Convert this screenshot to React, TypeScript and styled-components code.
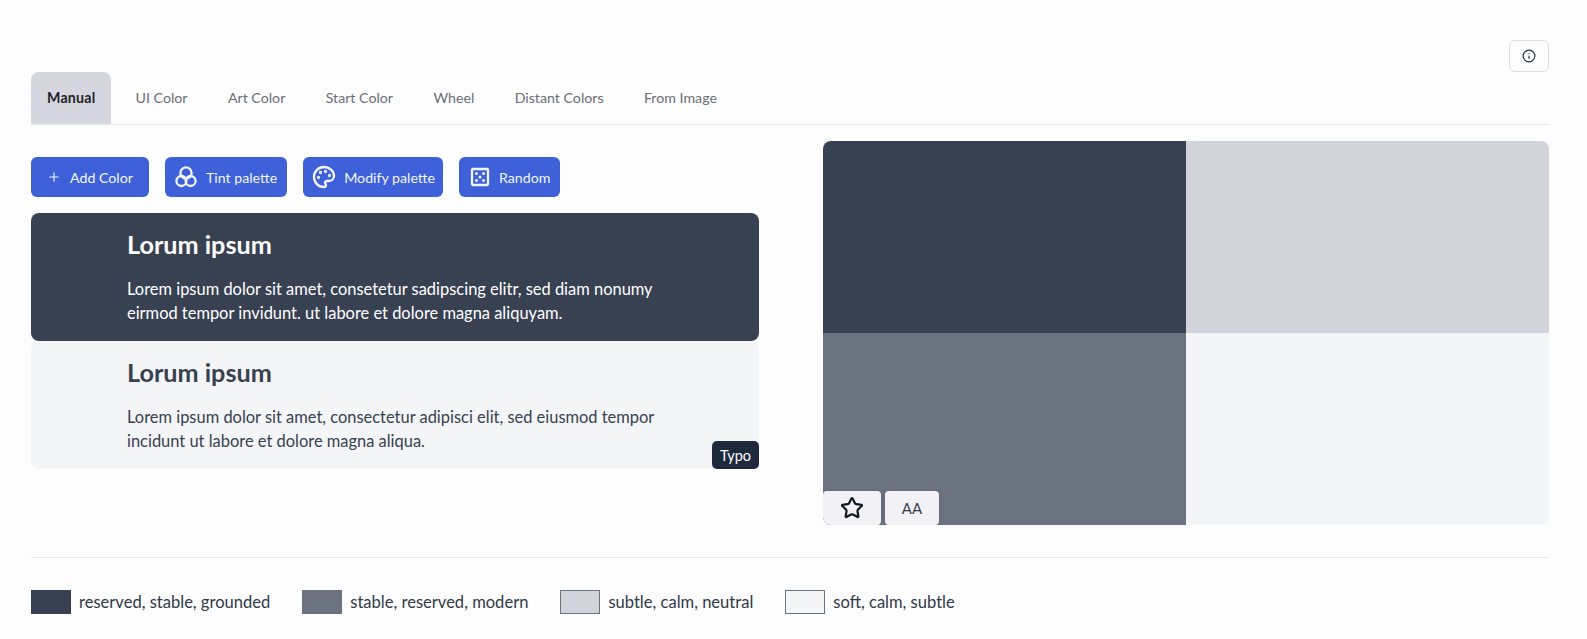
import React, { FC, ReactNode } from "react";
import styled, { createGlobalStyle } from "styled-components";
import { Info, Palette, Plus, Star } from "lucide-react";

const GlobalStyle = createGlobalStyle`
  html, body {
    margin: 0;
    padding: 0;
    background: #fdfdfe;
    font-family: "Lato", "Noto Sans", sans-serif;
    color: #1f2937;
  }
`;

const Page = styled.div`
  width: 1587px;
  height: 639px;
  box-sizing: border-box;
  padding: 40px 38px 0 31px;
  overflow: hidden;
`;

const TopBar = styled.div`
  display: flex;
  justify-content: flex-end;
`;

const InfoButton = styled.button`
  display: flex;
  align-items: center;
  justify-content: center;
  width: 40px;
  height: 32px;
  padding: 0;
  background: #fdfdfe;
  border: 1px solid #d9dce1;
  border-radius: 6px;
  color: #1f2937;
`;

const Tabs = styled.div`
  display: flex;
  gap: 8px;
  height: 52px;
  border-bottom: 1px solid #e5e7eb;
`;

const Tab = styled.div<{ $active?: boolean }>`
  display: flex;
  align-items: center;
  box-sizing: border-box;
  padding: 0 ${(p) => (p.$active ? "16px" : "16.2px")} 2px;
  height: 52px;
  font-size: 14.2px;
  font-weight: ${(p) => (p.$active ? 700 : 400)};
  letter-spacing: ${(p) => (p.$active ? "0.2px" : "0")};
  color: ${(p) => (p.$active ? "#1f2328" : "#6a6e75")};
  background: ${(p) => (p.$active ? "#d5d6df" : "transparent")};
  border-radius: 8px 8px 0 0;
`;

const Main = styled.div`
  display: grid;
  grid-template-columns: 728px 726px;
  column-gap: 64px;
  align-items: start;
`;

const LeftColumn = styled.div`
  padding-top: 32px;
`;

const Toolbar = styled.div`
  display: flex;
  gap: 16px;
  margin-bottom: 16px;
`;

const ActionButton = styled.button<{ $left: number; $right: number; $gap: number }>`
  display: flex;
  align-items: center;
  height: 40px;
  gap: ${(p) => p.$gap}px;
  padding: 0 ${(p) => p.$right}px 0 ${(p) => p.$left}px;
  border: none;
  border-radius: 6px;
  background: #3e60d8;
  color: #f4f6fe;
  font-family: inherit;
  font-size: 14.2px;
  white-space: nowrap;
`;

const CardStack = styled.div`
  position: relative;
`;

const Card = styled.div<{ $dark?: boolean }>`
  box-sizing: border-box;
  height: 128px;
  padding: 12.5px 90px 0 96px;
  border-radius: 8px;
  background: ${(p) => (p.$dark ? "#374151" : "#f3f5f6")};
  color: ${(p) => (p.$dark ? "#ffffff" : "#374151")};
`;

const CardTitle = styled.h2`
  margin: 0 0 15.5px;
  font-size: 25.2px;
  line-height: 36px;
  font-weight: 700;
`;

const CardText = styled.p`
  margin: 0;
  font-size: 16.45px;
  line-height: 24px;
`;

const TypoTag = styled.div`
  position: absolute;
  right: 0;
  bottom: 0;
  width: 47px;
  height: 28px;
  display: flex;
  align-items: center;
  justify-content: center;
  border-radius: 5px;
  background: #1e293b;
  color: #ffffff;
  font-size: 14.5px;
`;

const SwatchPanel = styled.div`
  position: relative;
  margin-top: 16px;
  display: grid;
  grid-template-columns: 1fr 1fr;
  grid-template-rows: 192px 192px;
  border-radius: 8px;
  overflow: hidden;
`;

const SwatchCell = styled.div<{ $color: string }>`
  background: ${(p) => p.$color};
`;

const PanelActions = styled.div`
  position: absolute;
  left: 0;
  bottom: 0;
  display: flex;
  gap: 4px;
`;

const PanelButton = styled.button<{ $width: number }>`
  display: flex;
  align-items: center;
  justify-content: center;
  width: ${(p) => p.$width}px;
  height: 34px;
  padding: 0;
  border: none;
  border-radius: 4px;
  background: #f2f2f6;
  color: #111827;
  font-family: inherit;
  font-size: 15px;
  box-shadow: 0 1px 3px rgba(0, 0, 0, 0.15);
`;

const ContrastButton = styled(PanelButton)`
  color: #374151;
`;

const Legend = styled.div`
  display: flex;
  align-items: center;
  gap: 32px;
  margin-top: 32px;
  padding-top: 32px;
  border-top: 1px solid #e5e7eb;
`;

const LegendItem = styled.div`
  display: flex;
  align-items: center;
  gap: 8px;
  font-size: 16.56px;
  color: #2f3947;
`;

const LegendSwatch = styled.div<{ $color: string; $outlined?: boolean }>`
  box-sizing: border-box;
  width: 40px;
  height: 24px;
  background: ${(p) => p.$color};
  border: 1px solid ${(p) => (p.$outlined ? "#6b7280" : p.$color)};
`;

const TintIcon: FC = () => (
  <svg width="22" height="22" viewBox="0 0 22 22" fill="none" stroke="currentColor" strokeWidth="2.3">
    <circle cx="11" cy="7" r="5.6" />
    <circle cx="6.4" cy="15" r="5" />
    <circle cx="15.6" cy="15" r="5" />
  </svg>
);

const DiceIcon: FC = () => (
  <svg width="22" height="22" viewBox="0 0 22 22" fill="none">
    <rect x="3" y="3" width="16" height="16" rx="1" stroke="currentColor" strokeWidth="2.3" />
    <g fill="currentColor">
      <circle cx="7.5" cy="7.5" r="1.5" />
      <circle cx="14.5" cy="7.5" r="1.5" />
      <circle cx="11" cy="11" r="1.5" />
      <circle cx="7.5" cy="14.5" r="1.5" />
      <circle cx="14.5" cy="14.5" r="1.5" />
    </g>
  </svg>
);

type ButtonDef = { label: string; left: number; right: number; gap: number; icon: ReactNode };

const buttons: ButtonDef[] = [
  { label: "Add Color", left: 16, right: 16, gap: 9, icon: <Plus size={14} /> },
  { label: "Tint palette", left: 10, right: 10, gap: 9, icon: <TintIcon /> },
  { label: "Modify palette", left: 9, right: 8, gap: 8, icon: <Palette size={24} strokeWidth={2.3} /> },
  { label: "Random", left: 10, right: 10, gap: 8, icon: <DiceIcon /> },
];

const tabs = ["Manual", "UI Color", "Art Color", "Start Color", "Wheel", "Distant Colors", "From Image"];

const legend = [
  { color: "#374151", text: "reserved, stable, grounded" },
  { color: "#6b7280", text: "stable, reserved, modern" },
  { color: "#d1d5db", text: "subtle, calm, neutral", outlined: true },
  { color: "#f3f5f6", text: "soft, calm, subtle", outlined: true },
];

const App: FC = () => (
  <Page>
    <GlobalStyle />
    <TopBar>
      <InfoButton aria-label="Info">
        <Info size={14} />
      </InfoButton>
    </TopBar>
    <Tabs>
      {tabs.map((t, i) => (
        <Tab key={t} $active={i === 0}>
          {t}
        </Tab>
      ))}
    </Tabs>
    <Main>
      <LeftColumn>
        <Toolbar>
          {buttons.map((b) => (
            <ActionButton key={b.label} $left={b.left} $right={b.right} $gap={b.gap}>
              {b.icon}
              {b.label}
            </ActionButton>
          ))}
        </Toolbar>
        <CardStack>
          <Card $dark>
            <CardTitle>Lorum ipsum</CardTitle>
            <CardText>
              Lorem ipsum dolor sit amet, consetetur sadipscing elitr, sed diam nonumy eirmod tempor
              invidunt. ut labore et dolore magna aliquyam.
            </CardText>
          </Card>
          <Card>
            <CardTitle>Lorum ipsum</CardTitle>
            <CardText>
              Lorem ipsum dolor sit amet, consectetur adipisci elit, sed eiusmod tempor incidunt ut
              labore et dolore magna aliqua.
            </CardText>
          </Card>
          <TypoTag>Typo</TypoTag>
        </CardStack>
      </LeftColumn>
      <SwatchPanel>
        <SwatchCell $color="#374151" />
        <SwatchCell $color="#d1d5db" />
        <SwatchCell $color="#6b7280" />
        <SwatchCell $color="#f3f5f6" />
        <PanelActions>
          <PanelButton $width={58} aria-label="Favourite">
            <Star size={24} strokeWidth={2.2} />
          </PanelButton>
          <ContrastButton $width={54}>AA</ContrastButton>
        </PanelActions>
      </SwatchPanel>
    </Main>
    <Legend>
      {legend.map((l) => (
        <LegendItem key={l.text}>
          <LegendSwatch $color={l.color} $outlined={l.outlined} />
          {l.text}
        </LegendItem>
      ))}
    </Legend>
  </Page>
);

export default App;
